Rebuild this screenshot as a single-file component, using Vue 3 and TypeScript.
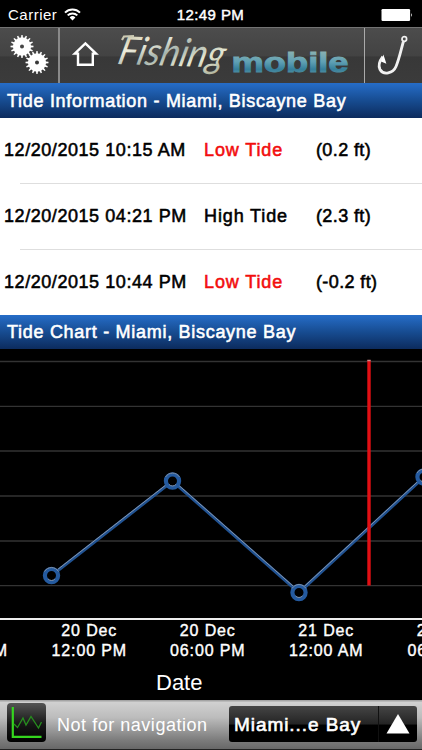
<script setup lang="ts">
interface Tide {
  time: string
  kind: 'Low Tide' | 'High Tide'
  height: string
}

const tides: Tide[] = [
  { time: '12/20/2015 10:15 AM', kind: 'Low Tide', height: '(0.2 ft)' },
  { time: '12/20/2015 04:21 PM', kind: 'High Tide', height: '(2.3 ft)' },
  { time: '12/20/2015 10:44 PM', kind: 'Low Tide', height: '(-0.2 ft)' },
]

const gridLines: number[] = [12.5, 57.3, 102, 147, 192, 236.7]

const points: { x: number; y: number }[] = [
  { x: 51.5, y: 226.5 },
  { x: 172.5, y: 132 },
  { x: 299, y: 243.5 },
  { x: 424, y: 128 },
]
const line = points.map((p) => `${p.x},${p.y}`).join(' ')

const ticks: { day: string; hour: string }[] = [
  { day: '20 Dec', hour: '06:00 AM' },
  { day: '20 Dec', hour: '12:00 PM' },
  { day: '20 Dec', hour: '06:00 PM' },
  { day: '21 Dec', hour: '12:00 AM' },
  { day: '21 Dec', hour: '06:00 AM' },
]

function gear(cx: number, cy: number): string {
  const teeth = 16
  const pts: string[] = []
  for (let i = 0; i < teeth; i++) {
    const radii = [9, 11.5, 11.5, 9]
    const offsets = [-0.27, -0.14, 0.14, 0.27]
    radii.forEach((r, k) => {
      const a = ((i + offsets[k]) / teeth) * Math.PI * 2
      pts.push(`${(cx + r * Math.cos(a)).toFixed(2)} ${(cy + r * Math.sin(a)).toFixed(2)}`)
    })
  }
  return `M${pts.join('L')}Z M${cx - 2} ${cy}a2 2 0 1 0 4 0a2 2 0 1 0 -4 0Z`
}
</script>

<template>
  <main class="screen">
    <div class="status">
      <div class="carrier">
        <span>Carrier</span>
        <svg width="17" height="13" viewBox="0 0 17 13">
          <g fill="none" stroke="#fff" stroke-width="2">
            <path d="M1 4.6a10.6 10.6 0 0 1 15 0" />
            <path d="M3.7 7.4a6.8 6.8 0 0 1 9.6 0" />
          </g>
          <path d="M5.6 9.4a4.2 4.2 0 0 1 5.8 0L8.5 12.4Z" fill="#fff" />
        </svg>
      </div>
      <span class="clock">12:49 PM</span>
      <svg class="battery" width="32" height="14" viewBox="0 0 32 14">
        <rect x="0.5" y="1" width="28.6" height="12" rx="1.2" fill="#fff" />
        <path d="M30 5q1.8 2 0 4Z" fill="#fff" />
      </svg>
    </div>

    <header class="nav">
      <button class="cell settings" aria-label="Settings">
        <svg width="58" height="55" viewBox="0 0 58 55">
          <path :d="gear(22, 18.5)" fill="#fff" fill-rule="evenodd" />
          <path :d="gear(37, 34.5)" fill="#fff" fill-rule="evenodd" />
        </svg>
      </button>
      <button class="cell home" aria-label="Home">
        <svg width="54" height="55" viewBox="0 0 54 55">
          <path d="M14.8 25.6L25.4 15.4L36 25.6H32.8V36.8H18V25.6Z" fill="none" stroke="#fff" stroke-width="2.4" />
        </svg>
      </button>
      <svg class="brand" width="250" height="55" viewBox="0 0 250 55">
        <defs>
          <linearGradient id="script" x1="0" y1="0" x2="1" y2="1">
            <stop offset="0" stop-color="#b5b293" />
            <stop offset=".3" stop-color="#f0eddb" />
            <stop offset=".5" stop-color="#a5b3ad" />
            <stop offset=".72" stop-color="#e5e7d2" />
            <stop offset="1" stop-color="#a6aa94" />
          </linearGradient>
          <linearGradient id="water" x1="0" y1="0" x2="0" y2="1">
            <stop offset="0" stop-color="#9bb9b0" />
            <stop offset=".48" stop-color="#5fa0b4" />
            <stop offset=".72" stop-color="#357f9b" />
            <stop offset="1" stop-color="#75a2a7" />
          </linearGradient>
        </defs>
        <text class="fishing" x="10" y="36" textLength="106" lengthAdjust="spacingAndGlyphs" transform="rotate(2 5 35) skewX(-12)">Fishing</text>
        <path d="M8 12L10 8.5L20 8.2" fill="none" stroke="#cbc9b2" stroke-width="2.2" />
        <text class="mobile" x="117.5" y="44" textLength="117" lengthAdjust="spacingAndGlyphs">mobile</text>
      </svg>
      <button class="cell hook" aria-label="Fishing spots">
        <svg width="58" height="55" viewBox="0 0 58 55">
          <g fill="none" stroke="#f1f1f1">
            <circle cx="39.3" cy="11" r="2.3" stroke-width="1.7" />
            <path d="M38.4 13.5C36 22 34.2 31 31 38.5C28 45.5 18.5 47.5 15 41.5C13.2 38 14.6 33 17.8 28.7" stroke-width="2.8" />
          </g>
          <path d="M18.4 26.5L21.4 35.8L16 33.6Z" fill="#fff" />
        </svg>
      </button>
    </header>

    <h2 class="title">Tide Information - Miami, Biscayne Bay</h2>
    <ul class="tides">
      <li v-for="tide in tides" :key="tide.time">
        <span class="time">{{ tide.time }}</span>
        <span class="kind" :class="{ low: tide.kind === 'Low Tide' }">{{ tide.kind }}</span>
        <span class="height">{{ tide.height }}</span>
      </li>
    </ul>

    <h2 class="title second">Tide Chart - Miami, Biscayne Bay</h2>
    <section class="chart">
      <svg class="plot" width="422" height="269" viewBox="0 0 422 269">
        <line v-for="y in gridLines" :key="y" x1="0" x2="422" :y1="y" :y2="y" stroke="#333" stroke-width="1.3" />
        <polyline :points="line" fill="none" stroke="#205292" stroke-width="3.2" />
        <polyline :points="line" fill="none" stroke="#8694a9" stroke-width="1" transform="translate(0 -1.2)" />
        <g v-for="p in points" :key="p.x">
          <circle :cx="p.x" :cy="p.y" r="6.6" fill="#000" stroke="#245a9f" stroke-width="4.2" />
          <path :d="`M${p.x - 7} ${p.y - 4}a8.2 8.2 0 0 1 14 0M${p.x - 3.5} ${p.y + 3.4}a4.6 4.6 0 0 0 7 0`" fill="none" stroke="#8190a5" stroke-width="1" />
        </g>
        <path d="M369 11.5V236.5" stroke="#e20f14" stroke-width="3.4" />
        <path d="M367.3 11.5H370.7" stroke="#c88" stroke-width="1.5" />
      </svg>
      <div class="axis">
        <div v-for="(tick, i) in ticks" :key="i" class="tick">
          <span>{{ tick.day }}</span>
          <span>{{ tick.hour }}</span>
        </div>
      </div>
      <div class="axis-title">Date</div>
    </section>

    <footer class="toolbar">
      <button class="graph" aria-label="Chart">
        <svg width="39" height="39" viewBox="0 0 39 39">
          <path d="M5.8 4V33.8H34.5" fill="none" stroke="#35d51e" stroke-width="2.2" />
          <path d="M7 21L10.5 24.5L16 15L19 22L24 13.5L31.5 25L34.5 19" fill="none" stroke="#278f1e" stroke-width="1.3" />
        </svg>
      </button>
      <span class="notice">Not for navigation</span>
      <button class="picker">
        <span class="place">Miami...e Bay</span>
        <span class="arrow">
          <svg width="24" height="20" viewBox="0 0 24 20"><path d="M12 0L23.5 19.5H.5Z" fill="#fff" /></svg>
        </span>
      </button>
    </footer>
  </main>
</template>

<style>
body {
  margin: 0;
  background: #000;
  overflow: hidden;
}
</style>

<style scoped>
.screen {
  width: 422px;
  height: 750px;
  overflow: hidden;
  display: flex;
  flex-direction: column;
  background: #000;
  color: #fff;
  font-family: 'Liberation Sans', Arial, sans-serif;
  white-space: nowrap;
}
svg {
  display: block;
  flex: none;
}
button {
  border: 0;
  margin: 0;
  padding: 0;
  background: none;
  color: inherit;
  font: inherit;
}
.status {
  flex: none;
  height: 27px;
  display: grid;
  grid-template-columns: 1fr auto 1fr;
  align-items: center;
  box-sizing: border-box;
  padding: 2px 9px 0 8px;
  font-size: 15px;
}
.carrier {
  display: flex;
  align-items: center;
  gap: 7px;
  letter-spacing: 0.5px;
}
.clock {
  font-size: 15px;
  letter-spacing: 0.4px;
  -webkit-text-stroke: 0.45px #fff;
}
.battery {
  justify-self: end;
}
.nav {
  flex: none;
  height: 56px;
  box-sizing: border-box;
  display: flex;
  border-top: 1px solid #737373;
  background: linear-gradient(#4c4c4c, #434343 50%, #383838 53%, #3b3b3b);
}
.cell {
  flex: none;
}
.settings {
  border-right: 2px solid #898989;
}
.home {
  width: 54px;
}
.brand {
  overflow: visible;
}
.hook {
  border-left: 1px solid #aaa;
  width: 57px;
}
.fishing {
  font: italic 400 39px Lato, sans-serif;
  fill: url(#script);
}
.mobile {
  font: 700 27.5px 'Liberation Sans', sans-serif;
  fill: url(#water);
  stroke: url(#water);
  stroke-width: 0.9px;
}
.title {
  flex: none;
  box-sizing: border-box;
  height: 35px;
  margin: 0;
  padding: 1px 7px 0;
  font-size: 18px;
  font-weight: 400;
  line-height: 35px;
  letter-spacing: 0.71px;
  background: linear-gradient(#266dc8, #174c91 50%, #0c2b5d);
  -webkit-text-stroke: 0.55px #fff;
}
.title.second {
  height: 34px;
  line-height: 32px;
}
.tides {
  flex: none;
  list-style: none;
  margin: 0;
  padding: 0;
  background: #fff;
  color: #000;
}
.tides li {
  display: grid;
  grid-template-columns: 200px 112px 1fr;
  height: 66px;
  box-sizing: border-box;
  padding: 0 0 1px 4px;
  align-items: center;
  font-size: 18px;
  letter-spacing: 0.56px;
  -webkit-text-stroke: 0.55px currentColor;
  background: linear-gradient(#dedede, #dedede) 20px 100% / 402px 1px no-repeat;
}
.tides li:last-child {
  height: 65px;
  background: none;
}
.kind {
  letter-spacing: 0.88px;
}
.height {
  letter-spacing: 0.38px;
}
.low {
  color: #f20d0d;
}
.chart {
  flex: none;
  height: 351px;
  background: #000;
}
.axis {
  border-top: 2px solid #eee;
  display: flex;
  margin-left: -88.5px;
  width: 620px;
}
.tick {
  flex: none;
  width: 118.5px;
  display: flex;
  flex-direction: column;
  align-items: center;
  padding-top: 1px;
  font-size: 16px;
  line-height: 20px;
  letter-spacing: 0.85px;
  -webkit-text-stroke: 0.4px #fff;
}
.axis-title {
  margin: 8px 0 0 156px;
  font-size: 22px;
  line-height: 28px;
}
.toolbar {
  flex: none;
  height: 50px;
  box-sizing: border-box;
  display: flex;
  align-items: flex-start;
  padding: 3px 5px 0 7px;
  background: linear-gradient(#999, #d0d0d0 5%, #bcbcbc 35%, #7c7c7c 80%, #686868 98%, #222 98%);
}
.graph {
  width: 39px;
  height: 39px;
  flex: none;
  border-radius: 4px;
  background: linear-gradient(#555, #161616 55%, #000);
}
.notice {
  margin-left: 11px;
  font-size: 18px;
  line-height: 44px;
  letter-spacing: 0.53px;
}
.picker {
  width: 188px;
  height: 36px;
  margin: 3px 0 0 auto;
  display: flex;
  border-radius: 3px;
  background: linear-gradient(#454545, #242424 50%, #000 53%);
}
.place {
  flex: 1;
  text-align: left;
  padding-left: 5px;
  font-size: 19px;
  line-height: 37px;
  letter-spacing: 0.93px;
  -webkit-text-stroke: 0.6px #fff;
}
.arrow {
  width: 38px;
  border-left: 1px solid #111;
  display: grid;
  place-items: center;
}
</style>
